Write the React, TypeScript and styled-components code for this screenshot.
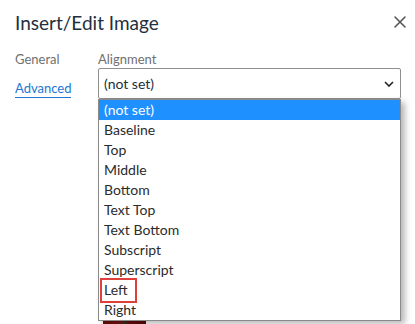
import React from 'react'
import styled, { createGlobalStyle } from 'styled-components'

const GlobalStyle = createGlobalStyle`
  html, body {
    margin: 0;
    padding: 0;
    background: #ffffff;
  }
  body {
    font-family: Lato, 'Noto Sans', sans-serif;
    color: #222f3e;
  }
`

const Dialog = styled.div`
  width: 415px;
  height: 324px;
  overflow: hidden;
  background: #ffffff;
`

const Header = styled.div`
  display: flex;
  align-items: center;
  justify-content: space-between;
  padding: 7px 3px 0 15px;
  height: 30px;
`

const Title = styled.h1`
  margin: 0;
  font-size: 19px;
  font-weight: 400;
  color: #222f3e;
`

const CloseButton = styled.button`
  display: flex;
  align-items: center;
  justify-content: center;
  width: 24px;
  height: 24px;
  padding: 0;
  border: none;
  background: transparent;
  color: #555555;
`

const Body = styled.div`
  display: flex;
  padding: 14px 14px 0 15px;
`

const Nav = styled.div`
  display: flex;
  flex-direction: column;
  gap: 11px;
  width: 83px;
  flex: none;
`

const NavItem = styled.span<{ $active?: boolean }>`
  align-self: flex-start;
  font-size: 13px;
  line-height: 17px;
  color: ${props => props.$active ? '#2276d2' : '#707070'};
  border-bottom: 1px solid ${props => props.$active ? '#2276d2' : 'transparent'};
`

const Main = styled.div`
  flex: 1;
  display: flex;
  flex-direction: column;
`

const Label = styled.label`
  font-size: 13px;
  line-height: 17px;
  color: #707070;
`

const SelectWrap = styled.div`
  position: relative;
`

const SelectBox = styled.div`
  display: flex;
  align-items: center;
  justify-content: space-between;
  height: 29px;
  padding: 0 6px 0 5px;
  border: 1px solid #8f8f8f;
  border-radius: 2px;
  font-size: 14px;
  color: #222f3e;
  background: #ffffff;
`

const List = styled.ul`
  position: absolute;
  top: 100%;
  left: 0;
  right: 0;
  margin: 0;
  padding: 0;
  list-style: none;
  background: #ffffff;
  border: 1px solid #8a8a8a;
  box-shadow: 4px 3px 6px rgba(0, 0, 0, 0.28);
  z-index: 2;
`

const Option = styled.li<{ $selected?: boolean }>`
  height: 20px;
  line-height: 20px;
  padding: 0 5px;
  font-size: 14px;
  color: ${props => props.$selected ? '#ffffff' : '#2b2b2b'};
  background: ${props => props.$selected ? '#1e90ff' : 'transparent'};
`

const Marked = styled.span`
  position: relative;

  &::after {
    content: '';
    position: absolute;
    left: -4px;
    right: -9px;
    top: -3px;
    bottom: -5px;
    border: 2px solid #e0403c;
  }
`

const Preview = styled.div`
  width: 43px;
  height: 40px;
  margin: 222px 0 0 5px;
  background: linear-gradient(90deg, #6b0b0b 0%, #7a1010 45%, #1f3a1f 50%, #6b0b0b 58%, #5a0808 100%);
`

const options = [
  '(not set)',
  'Baseline',
  'Top',
  'Middle',
  'Bottom',
  'Text Top',
  'Text Bottom',
  'Subscript',
  'Superscript',
  'Left',
  'Right',
]

const App: React.FC = () => {
  return (
    <Dialog>
      <GlobalStyle />
      <Header>
        <Title>Insert/Edit Image</Title>
        <CloseButton aria-label="Close">
          <svg width="14" height="14" viewBox="0 0 14 14" fill="none" stroke="currentColor" strokeWidth="1.6" strokeLinecap="round">
            <path d="M2 2 L12 12 M12 2 L2 12" />
          </svg>
        </CloseButton>
      </Header>
      <Body>
        <Nav>
          <NavItem>General</NavItem>
          <NavItem $active>Advanced</NavItem>
        </Nav>
        <Main>
          <Label>Alignment</Label>
          <SelectWrap>
            <SelectBox>
              <span>(not set)</span>
              <svg width="10" height="6" viewBox="0 0 10 6" fill="none" stroke="#222" strokeWidth="1.6">
                <path d="M1 1 L5 5 L9 1" />
              </svg>
            </SelectBox>
            <List>
              {options.map((opt, i) => (
                <Option key={opt} $selected={i === 0}>
                  {opt === 'Left' ? <Marked>{opt}</Marked> : opt}
                </Option>
              ))}
            </List>
          </SelectWrap>
          <Preview />
        </Main>
      </Body>
    </Dialog>
  )
}

export default App
